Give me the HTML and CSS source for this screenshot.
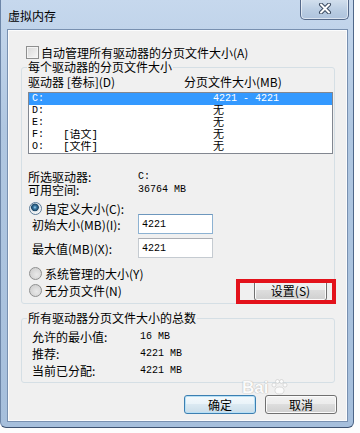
FILE: index.html
```html
<!DOCTYPE html>
<html lang="zh-CN">
<head>
    <meta charset="UTF-8">
    <meta name="viewport" content="width=device-width, initial-scale=1.0">
    <title>虚拟内存</title>
    <link rel="stylesheet" href="styles.css">
</head>
<body>
    <div class="window">
        <div class="titlebar">
            <span class="title">虚拟内存</span>
            <span class="close-btn">
                <svg width="14" height="11" viewBox="0 0 14 11">
                    <path d="M3 1.5 L11 9.5 M11 1.5 L3 9.5" stroke="#3d4d63" stroke-width="4" stroke-linecap="round"/>
                    <path d="M3 1.5 L11 9.5 M11 1.5 L3 9.5" stroke="#fff" stroke-width="2" stroke-linecap="round"/>
                </svg>
            </span>
        </div>
        <div class="client">
            <div class="check-row"><span class="checkbox"></span>自动管理所有驱动器的分页文件大小(A)</div>

            <div class="group group-drives">
                <div class="legend">每个驱动器的分页文件大小</div>
                <div class="list-head"><span class="head-left">驱动器 [卷标](D)</span><span>分页文件大小(MB)</span></div>
                <div class="listbox">
                    <div class="list-row selected"><span class="cell-left">C:</span><span>4221 - 4221</span></div>
                    <div class="list-row"><span class="cell-left">D:</span><span class="cjk">无</span></div>
                    <div class="list-row"><span class="cell-left">E:</span><span class="cjk">无</span></div>
                    <div class="list-row"><span class="cell-left"><span class="drv">F:</span><span class="cjk">[语文]</span></span><span class="cjk">无</span></div>
                    <div class="list-row"><span class="cell-left"><span class="drv">O:</span><span class="cjk">[文件]</span></span><span class="cjk">无</span></div>
                </div>

                <div class="info">
                    <span>所选驱动器:</span><span class="mono">C:</span>
                    <span>可用空间:</span><span class="mono">36764 MB</span>
                </div>

                <div class="radio-row first"><span class="radio checked"></span>自定义大小(C):</div>
                <div class="size-row">
                    <span class="size-label">初始大小(MB)(I):</span>
                    <input class="textbox focused" type="text" value="4221" readonly>
                </div>
                <div class="size-row second">
                    <span class="size-label">最大值(MB)(X):</span>
                    <input class="textbox" type="text" value="4221" readonly>
                </div>
                <div class="radio-row system"><span class="radio"></span>系统管理的大小(Y)</div>
                <div class="last-row">
                    <div class="radio-row"><span class="radio"></span>无分页文件(N)</div>
                    <div class="btn set-btn">设置(S)</div>
                </div>
            </div>

            <div class="group group-total">
                <div class="legend">所有驱动器分页文件大小的总数</div>
                <div class="totals">
                    <span>允许的最小值:</span><span class="mono">16 MB</span>
                    <span>推荐:</span><span class="mono">4221 MB</span>
                    <span>当前已分配:</span><span class="mono">4221 MB</span>
                </div>
            </div>

            <div class="buttons">
                <div class="btn default">确定</div>
                <div class="btn">取消</div>
            </div>
        </div>
    </div>

    <div class="watermark">
        <span class="wm-bai">Bai</span>
        <svg class="wm-paw" width="18" height="16" viewBox="0 0 18 16">
            <circle cx="4" cy="6" r="2" fill="#fff" stroke="#bbb" stroke-width="0.6"/>
            <circle cx="7.5" cy="2.5" r="2" fill="#fff" stroke="#bbb" stroke-width="0.6"/>
            <circle cx="11.5" cy="2.5" r="2" fill="#fff" stroke="#bbb" stroke-width="0.6"/>
            <circle cx="15" cy="6" r="2" fill="#fff" stroke="#bbb" stroke-width="0.6"/>
            <ellipse cx="9.5" cy="11.5" rx="4.5" ry="3.5" fill="#fff" stroke="#bbb" stroke-width="0.6"/>
        </svg>
    </div>
</body>
</html>
```

FILE: styles.css
```css
body {
    margin: 0;
    width: 360px;
    height: 433px;
    overflow: hidden;
    position: relative;
    background: #fdfdfd;
    font-family: "Noto Sans CJK SC", "Liberation Sans", sans-serif;
    font-size: 12px;
    color: #000;
}

.window {
    width: 354px;
    height: 428px;
    box-sizing: border-box;
    padding: 0 6px 6px 7px;
    background: linear-gradient(to bottom, #c6d8ed, #b0c7e1 30%, #a6bfdc);
    border-left: 1px solid #6d86a8;
    border-right: 1px solid #4e6688;
    border-bottom: 1px solid #3e5270;
    border-radius: 0 0 6px 6px;
    display: flex;
    flex-direction: column;
}

.titlebar {
    height: 30px;
    flex: none;
    display: flex;
    justify-content: space-between;
    align-items: flex-start;
}

.title {
    margin-top: 9px;
    line-height: 14px;
    color: #000;
}

.close-btn {
    width: 49px;
    height: 22px;
    box-sizing: border-box;
    margin: -2px -2px 0 0;
    border: 1px solid #55698a;
    border-top: none;
    border-radius: 0 0 5px 5px;
    background: linear-gradient(to bottom, #d6e2ef, #b9cce2 60%, #aec3dd);
    box-shadow: inset 0 0 0 1px rgba(255, 255, 255, 0.55);
    display: flex;
    align-items: center;
    justify-content: center;
}

.client {
    flex: none;
    height: 391px;
    box-sizing: border-box;
    border: 1px solid #fbfcfd;
    box-shadow: 0 0 0 1px #7890b0;
    background: #f0f0f0;
    padding: 13px 11px 0 12px;
}

.check-row {
    display: flex;
    align-items: center;
    height: 16px;
    padding-left: 5px;
    gap: 2px;
}

.checkbox {
    width: 13px;
    height: 13px;
    box-sizing: border-box;
    border: 1px solid #8e8f8f;
    background: linear-gradient(135deg, #d8d8d8, #f7f7f7);
    box-shadow: inset 0 0 0 1px #f4f4f4;
}

.group {
    border: 1px solid #d5dfe5;
    border-radius: 3px;
}

.group-drives {
    margin-top: 7px;
    padding-bottom: 2px;
}

.group-total {
    margin-top: 14px;
    padding-bottom: 3px;
}

.legend {
    width: fit-content;
    margin: -8px 0 0 5px;
    padding: 0 1px;
    line-height: 14px;
    background: #f0f0f0;
}

.list-head {
    display: flex;
    margin-top: 1px;
    padding-left: 6px;
    line-height: 14px;
}

.head-left {
    width: 156px;
}

.listbox {
    margin: 3px 1px 0 6px;
    border: 1px solid #828790;
    background: #fff;
    font-family: "Liberation Mono", "Noto Sans CJK SC", monospace;
    font-size: 10px;
}

.list-row {
    display: flex;
    height: 12px;
    line-height: 12px;
    padding-left: 3px;
    overflow: hidden;
}

.list-row.selected {
    background: #3399ff;
    color: #fff;
}

.cell-left {
    width: 181px;
    display: flex;
}

.drv {
    width: 31px;
}

.cjk {
    font-family: "Liberation Mono", "Noto Sans CJK SC", monospace;
    font-size: 11px;
    line-height: 12px;
}

.mono {
    font-family: "Liberation Mono", monospace;
    font-size: 10px;
}

.info {
    display: grid;
    grid-template-columns: 110px auto;
    margin-top: 16px;
    padding-left: 6px;
    line-height: 13px;
}

.radio-row {
    display: flex;
    align-items: center;
    height: 14px;
    padding-left: 7px;
    gap: 3px;
}

.radio-row.first {
    margin-top: 5px;
}

.radio-row.system {
    margin-top: 8px;
}

.radio {
    width: 13px;
    height: 13px;
    box-sizing: border-box;
    border-radius: 50%;
    border: 1px solid #8e8f8f;
    background: radial-gradient(circle at 60% 60%, #e9e9e9, #d2d2d2 70%, #f4f4f4);
}

.radio.checked {
    border-color: #5c7c99;
    background: radial-gradient(circle at 45% 40%, #a6dcf5 0, #3d7ba8 1.5px, #1b4563 3.5px, #dfe6ec 4.2px, #f6f6f6 6px);
}

.size-row {
    display: flex;
    align-items: center;
    height: 20px;
    margin-top: -1px;
    padding-left: 10px;
}

.size-row.second {
    margin-top: 4px;
}

.size-label {
    width: 106px;
}

.textbox {
    width: 75px;
    height: 20px;
    box-sizing: border-box;
    margin: 0;
    padding: 0 0 0 3px;
    border: 1px solid #c5cbd1;
    border-top-color: #abadb3;
    background: #fff;
    font-family: "Liberation Mono", monospace;
    font-size: 10px;
    color: #000;
    outline: none;
}

.textbox.focused {
    border-color: #8db2d2;
    border-top-color: #6d97bd;
}

.last-row {
    display: flex;
    align-items: center;
    justify-content: space-between;
    height: 21px;
    padding-right: 7px;
}

.last-row .radio-row {
    padding-left: 7px;
}

.btn {
    width: 72px;
    height: 19px;
    box-sizing: border-box;
    border: 1px solid #707070;
    border-radius: 3px;
    background: linear-gradient(to bottom, #f2f2f2 0%, #ebebeb 49%, #dddddd 50%, #cfcfcf 100%);
    box-shadow: inset 0 0 0 1px #fbfbfb;
    text-align: center;
    line-height: 17px;
}

.btn.default {
    border-color: #3c7fb1;
    background: linear-gradient(to bottom, #f4f9fc 0%, #e9f3f9 49%, #dbe9f2 50%, #cadde9 100%);
    box-shadow: inset 0 0 0 1px #b7e0f6;
}

.set-btn {
    position: relative;
    width: 73px;
    height: 21px;
    line-height: 19px;
}

.set-btn::after {
    content: "";
    position: absolute;
    left: -19px;
    right: -10px;
    top: -2px;
    bottom: -4px;
    border: 4px solid #e3121b;
}

.totals {
    display: grid;
    grid-template-columns: 108px auto;
    margin-top: 3px;
    padding-left: 10px;
    line-height: 17px;
}

.buttons {
    display: flex;
    justify-content: flex-end;
    gap: 9px;
    margin: 12px -2px 0 0;
}

.watermark {
    position: absolute;
    left: 242px;
    top: 378px;
    display: flex;
    align-items: flex-start;
    gap: 2px;
    opacity: 0.75;
    pointer-events: none;
}

.wm-bai {
    font-family: "Liberation Sans", sans-serif;
    font-weight: bold;
    font-size: 17px;
    line-height: 20px;
    color: #fff;
    text-shadow: 0 0 1px #a0a0a0, 0 0 1px #a0a0a0;
}

.wm-paw {
    margin-top: 1px;
}
```
